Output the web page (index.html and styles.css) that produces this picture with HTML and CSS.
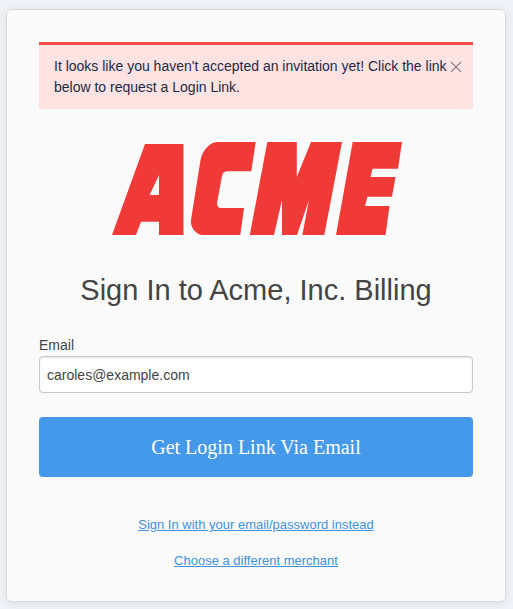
FILE: index.html
```html
<!DOCTYPE html>
<html lang="en">
<head>
  <meta charset="UTF-8">
  <meta name="viewport" content="width=device-width, initial-scale=1">
  <title>Sign In to Acme, Inc. Billing</title>
  <link rel="stylesheet" href="styles.css">
</head>
<body>
  <main class="card">
    <div class="alert" role="alert">
      <p class="alert-text">It looks like you haven't accepted an invitation yet! Click the link below to request a Login Link.</p>
      <button type="button" class="alert-close" aria-label="Close">
        <svg width="12" height="12" viewBox="0 0 12 12" fill="none" stroke="currentColor" stroke-width="1.2">
          <path d="M1 1l10 10M11 1L1 11"/>
        </svg>
      </button>
    </div>

    <svg class="logo" viewBox="110 142 292 93" role="img" aria-label="Acme">
      <path fill-rule="evenodd" d="M145 144H183.500V235H159V221.700H141L136 235H112ZM159 175L149.700 195H159Z"/>
      <path d="M255.700 142L251.300 171.300H228Q223 171 222 176L217 203Q217 208 221 208H244L240.300 235H203C196 235 190 227 191 220L200.500 160C202 151 210 142 217 142Z"/>
      <path d="M267.300 142H296.800V177L311 142H342L324.300 235H302.300L309 200L297 235H282V200L274 235H249.800Z"/>
      <path d="M352.700 142H402L398 168.700H372.500L370.500 177H395.500L392 196.700H367.500L365 206H389.500L385.500 235H336Z"/>
    </svg>

    <h1>Sign In to Acme, Inc. Billing</h1>

    <form>
      <label for="email">Email</label>
      <input type="email" id="email" name="email" value="caroles@example.com">
      <button type="submit" class="submit">Get Login Link Via Email</button>
    </form>

    <nav class="links">
      <a href="#">Sign In with your email/password instead</a>
      <a href="#">Choose a different merchant</a>
    </nav>
  </main>
</body>
</html>
```

FILE: styles.css
```css
* {
  box-sizing: border-box;
}

body {
  margin: 0;
  padding: 9px 7px 7px 6px;
  background-color: #f1f2f7;
  color: #444;
  font-family: "Helvetica Neue", "Liberation Sans", Arial, sans-serif;
  font-size: 14px;
  line-height: 20px;
}

.card {
  max-width: 500px;
  margin: 0 auto;
  padding: 32px 32px 30px;
  background-color: #fafafa;
  border: 1px solid #d9dbdb;
  border-radius: 5px;
  box-shadow: 0 2px 10px rgba(0, 0, 0, 0.07);
}

.alert {
  position: relative;
  padding: 11px 20px 11px 15px;
  background-color: #ffe2e2;
  border-top: 3px solid #ff4a4a;
  color: #1c2a42;
}

.alert-text {
  margin: 0;
  font-size: 14px;
  line-height: 21px;
}

.alert-close {
  position: absolute;
  top: 15px;
  right: 10px;
  display: flex;
  padding: 1px;
  background: none;
  border: none;
  color: #8f8289;
  cursor: pointer;
}

.logo {
  display: block;
  width: 292px;
  max-width: 100%;
  margin: 33px auto 0;
  fill: #f03a38;
}

h1 {
  margin: 35px 0 25px;
  font-size: 29px;
  font-weight: normal;
  line-height: 40px;
  text-align: center;
}

label {
  display: block;
  margin-bottom: 1px;
}

input {
  display: block;
  width: 100%;
  height: 37px;
  padding: 0 7px;
  background-color: #fff;
  border: 1px solid #c8c8c8;
  border-radius: 4px;
  box-shadow: inset 0 1px 2px rgba(0, 0, 0, 0.1);
  color: #444;
  font: inherit;
}

.submit {
  display: block;
  width: 100%;
  height: 60px;
  margin-top: 24px;
  background-color: #4499eb;
  border: none;
  border-radius: 4px;
  color: #fff;
  font-family: "Liberation Serif", "Times New Roman", serif;
  font-size: 20px;
  cursor: pointer;
}

.links {
  display: flex;
  flex-direction: column;
  align-items: center;
  gap: 16px;
  margin-top: 38px;
}

.links a {
  color: #4390dc;
  font-size: 13px;
}
```
